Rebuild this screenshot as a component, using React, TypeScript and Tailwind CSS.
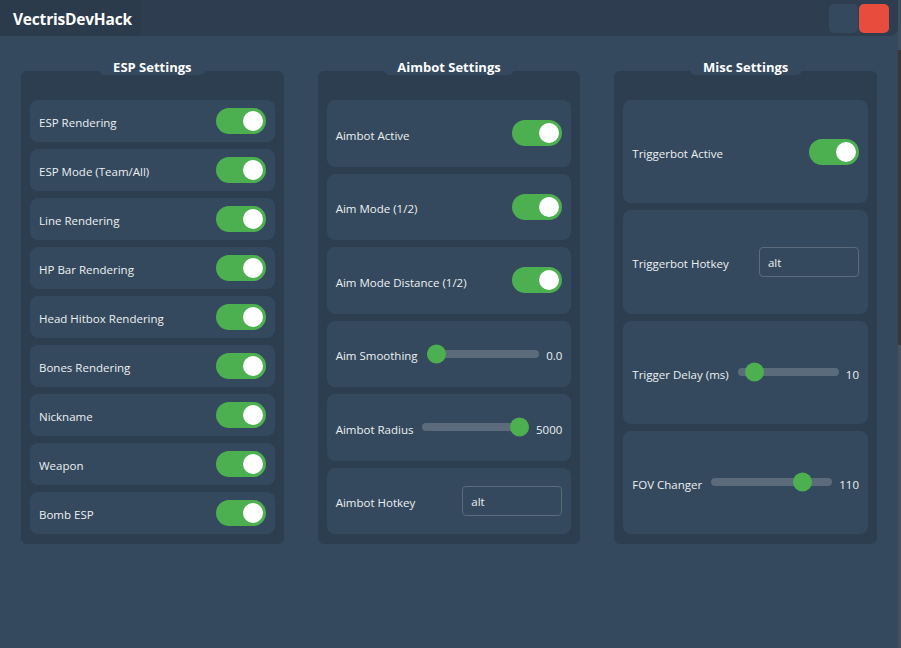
import React from 'react';

const font = { fontFamily: '"Open Sans", "Noto Sans", sans-serif' };

const Toggle: React.FC<{ on?: boolean }> = ({ on = true }) => (
  <div className={`relative w-[50px] h-[26px] rounded-full shrink-0 ${on ? 'bg-[#4caf50]' : 'bg-[#5b6b7c]'}`}>
    <div className="absolute top-[3px] right-[3px] w-[20px] h-[20px] rounded-full bg-white" />
  </div>
);

const Slider: React.FC<{ pct: number; value: string }> = ({ pct, value }) => (
  <div className="flex items-center flex-1 ml-[9px]">
    <div className="relative flex-1 h-[8px] rounded-full bg-[#5b6b7c]">
      <div
        className="absolute top-1/2 -translate-y-1/2 w-[19px] h-[19px] rounded-full bg-[#4caf50]"
        style={{ left: `calc(${pct} * (100% - 19px))` }}
      />
    </div>
    <span className="ml-[7px] pt-[4px] text-[11.5px] text-[#ecf0f1]">{value}</span>
  </div>
);

const HotkeyInput: React.FC<{ value: string }> = ({ value }) => (
  <div className="w-[100px] h-[30px] rounded-[4px] border border-[#5b6b7c] flex items-center pl-[8px] pt-[2px] text-[11.5px] text-[#ecf0f1] shrink-0">
    {value}
  </div>
);

type Row =
  | { label: string; kind: 'toggle' }
  | { label: string; kind: 'slider'; pct: number; value: string }
  | { label: string; kind: 'input'; value: string };

const Panel: React.FC<{ title: string; rows: Row[] }> = ({ title, rows }) => (
  <div className="relative bg-[#2c3e50] rounded-[6px] pt-[29px] px-[9px] pb-[10px] flex flex-col gap-[7px]">
    <div className="absolute -top-[13px] left-1/2 -translate-x-1/2 h-[17px] px-[14px] bg-[#34495e] rounded-b-[6px] flex items-center">
      <span className="pt-[3px] text-[13px] font-bold text-white whitespace-nowrap">{title}</span>
    </div>
    {rows.map((r, i) => (
      <div key={i} className="flex-1 bg-[#34495e] rounded-[8px] px-[9px] flex items-center justify-between">
        <span className="pt-[4px] text-[11.5px] text-[#ecf0f1] whitespace-nowrap">{r.label}</span>
        {r.kind === 'toggle' && <Toggle />}
        {r.kind === 'slider' && <Slider pct={r.pct} value={r.value} />}
        {r.kind === 'input' && <HotkeyInput value={r.value} />}
      </div>
    ))}
  </div>
);

const App: React.FC = () => {
  const esp: Row[] = [
    'ESP Rendering',
    'ESP Mode (Team/All)',
    'Line Rendering',
    'HP Bar Rendering',
    'Head Hitbox Rendering',
    'Bones Rendering',
    'Nickname',
    'Weapon',
    'Bomb ESP',
  ].map((label) => ({ label, kind: 'toggle' as const }));

  const aimbot: Row[] = [
    { label: 'Aimbot Active', kind: 'toggle' },
    { label: 'Aim Mode (1/2)', kind: 'toggle' },
    { label: 'Aim Mode Distance (1/2)', kind: 'toggle' },
    { label: 'Aim Smoothing', kind: 'slider', pct: 0, value: '0.0' },
    { label: 'Aimbot Radius', kind: 'slider', pct: 1, value: '5000' },
    { label: 'Aimbot Hotkey', kind: 'input', value: 'alt' },
  ];

  const misc: Row[] = [
    { label: 'Triggerbot Active', kind: 'toggle' },
    { label: 'Triggerbot Hotkey', kind: 'input', value: 'alt' },
    { label: 'Trigger Delay (ms)', kind: 'slider', pct: 0.09, value: '10' },
    { label: 'FOV Changer', kind: 'slider', pct: 0.8, value: '110' },
  ];

  return (
    <div className="flex w-[901px] h-[648px] overflow-hidden" style={font}>
      <div className="w-[898px] h-full bg-[#34495e] flex flex-col">
        {/* title bar */}
        <div className="h-[36px] bg-[#2e3e50] rounded-br-[8px] flex items-center justify-between">
          <div className="h-full bg-[#2c3b4c] rounded-br-[10px] flex items-center pl-[13px] pr-[10px]">
            <span className="pt-[3px] text-[15.5px] font-bold text-white tracking-[-0.2px]">VectrisDevHack</span>
          </div>
          <div className="flex gap-[1px] mr-[9px]">
            <div className="w-[29px] h-[29px] rounded-[5px] bg-[#34495e]" />
            <div className="w-[30px] h-[29px] rounded-[5px] bg-[#e74c3c]" />
          </div>
        </div>

        <div className="grid grid-cols-3 gap-[34px] px-[21px] mt-[35px] h-[473px]">
          <Panel title="ESP Settings" rows={esp} />
          <Panel title="Aimbot Settings" rows={aimbot} />
          <Panel title="Misc Settings" rows={misc} />
        </div>
      </div>
      <div className="w-[3px] h-full flex flex-col">
        <div className="h-[50px] bg-[#3f5061]" />
        <div className="h-[295px] bg-[#3b3533]" />
        <div className="flex-1 bg-[#4a5057]" />
      </div>
    </div>
  );
};

export default App;
